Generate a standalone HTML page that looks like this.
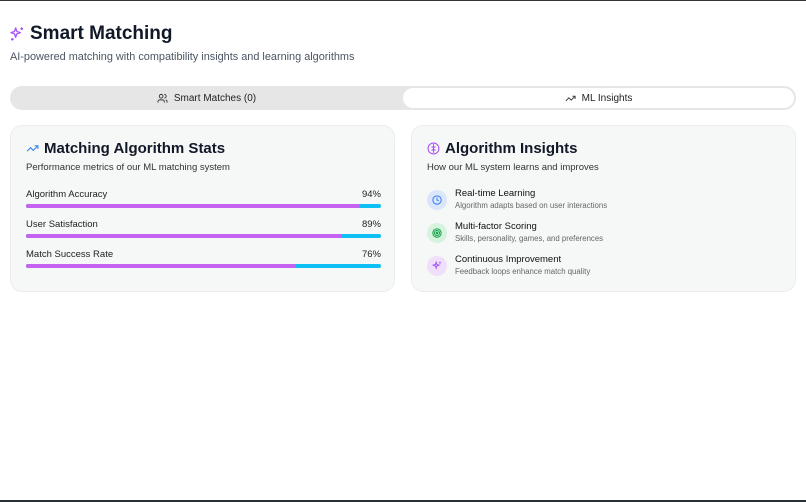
<!DOCTYPE html>
<html><head><style>
*{box-sizing:border-box;margin:0;padding:0}
body{width:806px;height:502px;background:#fff;font-family:"Liberation Sans",sans-serif;color:#111827;position:relative;overflow:hidden;border-top:1px solid #333}
.abs{position:absolute}
h1{position:absolute;left:30px;top:22px;font-size:19px;font-weight:bold}
.sub{left:10px;top:50px;font-size:10.9px;color:#4b5563}
.tabs{left:10px;top:85px;width:786px;height:24px;border-radius:12px;background:#e6e6e6}
.tab{position:absolute;top:0;height:24px;font-size:10px;display:flex;align-items:center;justify-content:center;gap:6px;color:#222}
.act{left:393px;top:2px;height:20px;width:391px;background:#fff;border-radius:10px}
.card{top:124px;width:385px;height:167px;background:#f6f7f7;border:1px solid #eceeee;border-radius:12px}
.ct{position:absolute;left:15px;top:14px;font-size:15px;font-weight:bold;display:flex;align-items:center;gap:5px}
.cs{position:absolute;left:15px;top:36px;font-size:9.5px;color:#333}
.row{position:absolute;left:15px;width:355px;font-size:9.5px;color:#222}
.row span{float:right}
.bar{position:absolute;left:0;top:15px;width:355px;height:4px;border-radius:2px;background:#0fc0f5;overflow:hidden}
.bar i{display:block;height:4px;background:#c563f0}
.it{position:absolute;left:15px;display:flex;gap:8px}
.ic{width:20px;height:20px;border-radius:10px;display:flex;align-items:center;justify-content:center;margin-top:2px}
.it b{display:block;font-size:9.5px;font-weight:normal;color:#111}
.it small{display:block;font-size:7.8px;color:#666;margin-top:2px}
.bot{left:0;bottom:0;width:806px;height:2px;background:#2a3038}
</style></head><body>
<svg class="abs" style="left:9px;top:25px" width="16" height="16" viewBox="0 0 24 24" fill="none" stroke="#a855f7" stroke-width="2" stroke-linejoin="round"><path d="M10 3l1.8 5.2L17 10l-5.2 1.8L10 17l-1.8-5.2L3 10l5.2-1.8z"/><path d="M19 2v4M17 4h4M5 18v4M3 20h4"/></svg>
<h1>Smart Matching</h1>
<div class="abs sub">AI-powered matching with compatibility insights and learning algorithms</div>
<div class="abs tabs">
 <div class="tab" style="left:0;width:393px"><svg width="11" height="11" viewBox="0 0 24 24" fill="none" stroke="#333" stroke-width="2"><circle cx="9" cy="7" r="4"/><path d="M2 21v-2a4 4 0 014-4h6a4 4 0 014 4v2M16 3a4 4 0 010 8M22 21v-2a4 4 0 00-3-3.9"/></svg>Smart Matches (0)</div>
 <div class="tab act"><svg width="11" height="11" viewBox="0 0 24 24" fill="none" stroke="#333" stroke-width="2"><path d="M22 7l-8.5 8.5-5-5L2 17M16 7h6v6"/></svg>ML Insights</div>
</div>
<div class="abs card" style="left:10px">
 <div class="ct"><svg width="13" height="13" viewBox="0 0 24 24" fill="none" stroke="#3b82f6" stroke-width="2"><path d="M22 7l-8.5 8.5-5-5L2 17M16 7h6v6"/></svg>Matching Algorithm Stats</div>
 <div class="cs">Performance metrics of our ML matching system</div>
 <div class="row" style="top:63px">Algorithm Accuracy<span>94%</span><div class="bar"><i style="width:94%"></i></div></div>
 <div class="row" style="top:93px">User Satisfaction<span>89%</span><div class="bar"><i style="width:89%"></i></div></div>
 <div class="row" style="top:123px">Match Success Rate<span>76%</span><div class="bar"><i style="width:76%"></i></div></div>
</div>
<div class="abs card" style="left:411px">
 <div class="ct"><svg width="13" height="13" viewBox="0 0 24 24" fill="none" stroke="#a855f7" stroke-width="2"><circle cx="12" cy="12" r="10"/><path d="M12 4v16M8 9c2 0 4 1 4 3M16 9c-2 0-4 1-4 3M8 15c2 0 4-1 4-3M16 15c-2 0-4-1-4-3"/></svg>Algorithm Insights</div>
 <div class="cs">How our ML system learns and improves</div>
 <div class="it" style="top:62px"><div class="ic" style="background:#dbe6fb"><svg width="10" height="10" viewBox="0 0 24 24" fill="none" stroke="#3b82f6" stroke-width="2.5"><circle cx="12" cy="12" r="10"/><path d="M12 6v6l4 2"/></svg></div><div><b>Real-time Learning</b><small>Algorithm adapts based on user interactions</small></div></div>
 <div class="it" style="top:95px"><div class="ic" style="background:#d6f3df"><svg width="10" height="10" viewBox="0 0 24 24" fill="none" stroke="#16a34a" stroke-width="2.5"><circle cx="12" cy="12" r="10"/><circle cx="12" cy="12" r="6"/><circle cx="12" cy="12" r="2"/></svg></div><div><b>Multi-factor Scoring</b><small>Skills, personality, games, and preferences</small></div></div>
 <div class="it" style="top:128px"><div class="ic" style="background:#efdffb"><svg width="10" height="10" viewBox="0 0 24 24" fill="none" stroke="#a855f7" stroke-width="2.5"><path d="M10 3l1.8 5.2L17 10l-5.2 1.8L10 17l-1.8-5.2L3 10l5.2-1.8z"/><path d="M19 2v4M17 4h4"/></svg></div><div><b>Continuous Improvement</b><small>Feedback loops enhance match quality</small></div></div>
</div>
<div class="abs bot"></div>
</body></html>
